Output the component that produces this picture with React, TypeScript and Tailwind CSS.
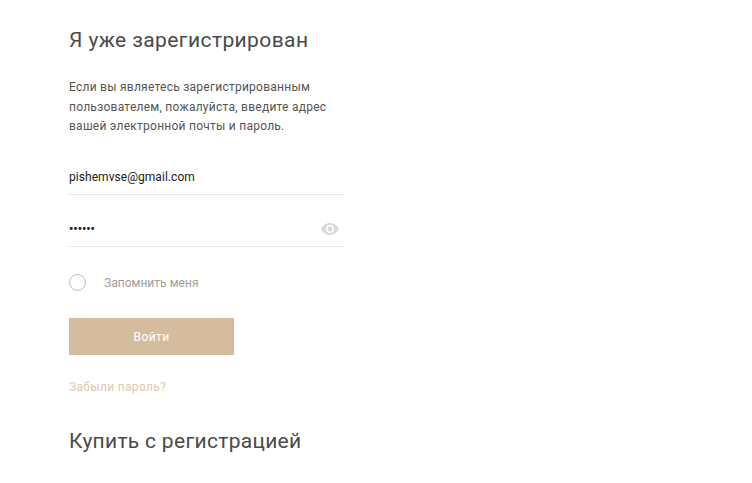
import React from "react";

export default function App() {
  return (
    <div className="h-[483px] w-[752px] overflow-hidden bg-white pl-[69px] font-['Roboto',sans-serif]">
      <div className="flex w-[275px] flex-col">
        <h2 className="mt-[27px] text-[21px] leading-[26px] tracking-[0.4px] text-[#4a4a4a] font-normal">Я уже зарегистрирован</h2>
        <p className="mt-[25px] w-[275px] text-[12px] leading-[19.5px] tracking-[0.25px] text-[#555555]">
          Если вы являетесь зарегистрированным<br />
          пользователем, пожалуйста, введите адрес<br />
          вашей электронной почты и пароль.
        </p>
        <div className="mt-[23px] flex h-[35px] items-center border-b border-[#e8e8e8] text-[12px] tracking-[0.05px] text-[#212121]">pishemvse@gmail.com</div>
        <div className="mt-[14px] flex h-[38px] items-center justify-between border-b border-[#e8e8e8] pr-[5px] pt-[3px]">
          <span className="text-[12px] font-bold text-[#212121]">••••••</span>
          <svg width="18" height="12" viewBox="0 0 18 12" aria-hidden="true">
            <path fillRule="evenodd" fill="#d9d9d9" d="M9 0C5 0 1.6 2.5 0 6c1.6 3.5 5 6 9 6s7.4-2.5 9-6c-1.600-3.500-5-6-9-6zm0 10a4 4 0 1 1 0-8 4 4 0 0 1 0 8zm0-6.400a2.400 2.400 0 1 0 0 4.800 2.400 2.400 0 0 0 0-4.800z" />
          </svg>
        </div>
        <label className="mt-[27px] flex items-center">
          <span className="h-[17px] w-[17px] rounded-full border border-[#bdbdbd]" />
          <span className="ml-[18px] text-[12px] tracking-[0.02px] text-[#9e9e9e]">Запомнить меня</span>
        </label>
        <button className="mt-[26px] h-[37px] w-[165px] bg-[#d6bc9e] pt-[2px] text-[12px] tracking-[0.4px] text-white">Войти</button>
        <a className="mt-[24px] text-[12px] leading-[16px] tracking-[0.33px] text-[#e0c9ad]">Забыли пароль?</a>
        <h2 className="mt-[33px] text-[21px] leading-[26px] tracking-[0.3px] text-[#4a4a4a] font-normal">Купить с регистрацией</h2>
      </div>
    </div>
  );
}
